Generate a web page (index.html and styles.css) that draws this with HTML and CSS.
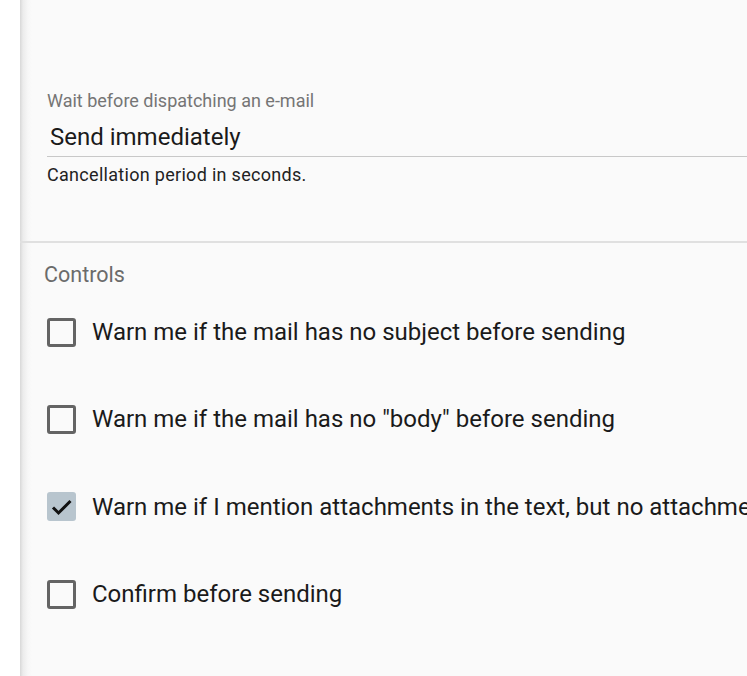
FILE: index.html
```html
<!DOCTYPE html>
<html lang="en">
<head>
    <meta charset="UTF-8">
    <meta name="viewport" content="width=device-width, initial-scale=1.0">
    <title>Sending settings</title>
    <link rel="stylesheet" href="styles.css">
</head>
<body>
    <div class="panel">
        <div class="field-section">
            <label class="field-label" for="delay">Wait before dispatching an e-mail</label>
            <div class="field-input" id="delay">Send immediately</div>
            <div class="field-hint">Cancellation period in seconds.</div>
        </div>
        <div class="controls">
            <h2 class="controls-title">Controls</h2>
            <div class="check-row">
                <span class="checkbox"></span>
                <span class="check-label">Warn me if the mail has no subject before sending</span>
            </div>
            <div class="check-row">
                <span class="checkbox"></span>
                <span class="check-label">Warn me if the mail has no "body" before sending</span>
            </div>
            <div class="check-row">
                <span class="checkbox checked">
                    <svg viewBox="0 0 29 29" width="29" height="29"><path d="M6 15.5 L11.5 21 L23.5 9" fill="none" stroke="#111" stroke-width="3"/></svg>
                </span>
                <span class="check-label">Warn me if I mention attachments in the text, but no attachment is added</span>
            </div>
            <div class="check-row">
                <span class="checkbox"></span>
                <span class="check-label">Confirm before sending</span>
            </div>
        </div>
    </div>
</body>
</html>
```

FILE: styles.css
```css
body {
    margin: 0;
    background-color: #fff;
    font-family: Roboto, "Noto Sans", sans-serif;
    overflow: hidden;
}
.panel {
    margin-left: 20px;
    width: 1000px;
    min-height: 676px;
    background-color: #fafafa;
    background-image: linear-gradient(to right, #d8d8d8, #ececec 3px, #f7f7f7 8px, #fafafa 12px);
}
.field-section {
    padding: 90px 0 55px 27px;
    border-bottom: 2px solid #e0e0e0;
}
.field-label {
    display: block;
    font-size: 18px;
    line-height: 22px;
    color: #757575;
}
.field-input {
    margin-top: 7px;
    height: 37px;
    line-height: 37px;
    padding-left: 3px;
    font-size: 24px;
    color: #1a1a1a;
    border-bottom: 1px solid #c8c8c8;
}
.field-hint {
    margin-top: 7px;
    font-size: 18px;
    line-height: 22px;
    letter-spacing: 0.3px;
    color: #222;
}
.controls {
    padding-left: 24px;
}
.controls-title {
    margin: 21px 0 2.5px;
    font-size: 21.5px;
    line-height: 22px;
    font-weight: 400;
    color: #6b6b6b;
}
.check-row {
    display: flex;
    align-items: center;
    height: 87.3px;
}
.checkbox {
    box-sizing: border-box;
    width: 29px;
    height: 29px;
    margin-left: 3px;
    border: 3px solid #646464;
    border-radius: 3px;
    flex-shrink: 0;
}
.checkbox.checked {
    border: none;
    background-color: #b8c5ce;
}
.checkbox svg {
    display: block;
}
.check-label {
    margin-left: 16px;
    font-size: 24px;
    color: #1a1a1a;
    white-space: nowrap;
}
```
